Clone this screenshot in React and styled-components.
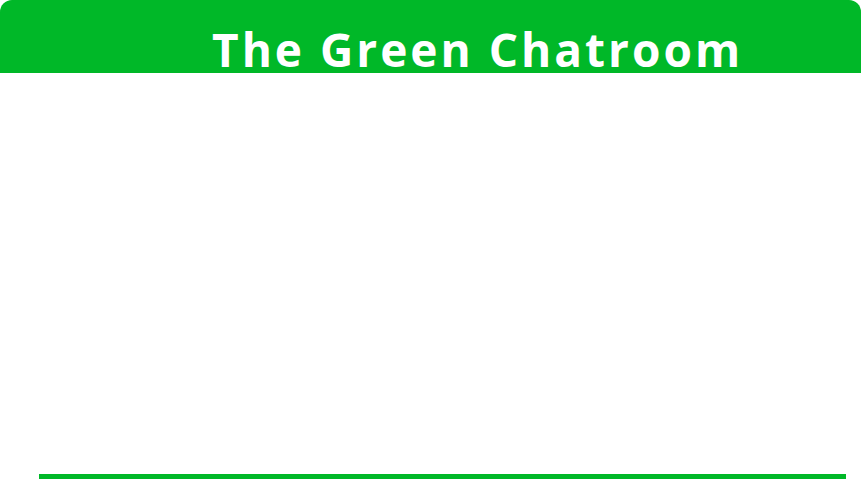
import React from "react";
import styled, { createGlobalStyle } from "styled-components";

const GlobalStyle = createGlobalStyle`
  html, body {
    margin: 0;
    padding: 0;
    background: #ffffff;
  }
  body {
    font-family: "Open Sans", "DejaVu Sans", sans-serif;
  }
`;

const Page = styled.div`
  width: 861px;
  height: 479px;
  display: flex;
  flex-direction: column;
  overflow: hidden;
`;

const Header = styled.div`
  height: 73px;
  background-color: #00b828;
  border-radius: 12px 12px 0 0;
  display: flex;
  align-items: flex-end;
  padding-left: 212px;
  box-sizing: border-box;
  overflow: hidden;
`;

const Title = styled.h1`
  margin: 0;
  color: #ffffff;
  font-family: "Open Sans", sans-serif;
  font-weight: 700;
  font-size: 46px;
  letter-spacing: 3px;
  line-height: 1;
  padding-bottom: 1px;
  white-space: nowrap;
`;

const Messages = styled.div`
  flex: 1;
`;

const InputRow = styled.div`
  padding: 0 15px 0 39px;
`;

const Input = styled.input`
  width: 100%;
  box-sizing: border-box;
  border: none;
  border-bottom: 5px solid #00b828;
  outline: none;
  height: 40px;
  font-size: 16px;
  display: block;
`;

export default function App() {
  return (
    <Page>
      <GlobalStyle />
      <Header>
        <Title>The Green Chatroom</Title>
      </Header>
      <Messages />
      <InputRow>
        <Input type="text" />
      </InputRow>
    </Page>
  );
}
